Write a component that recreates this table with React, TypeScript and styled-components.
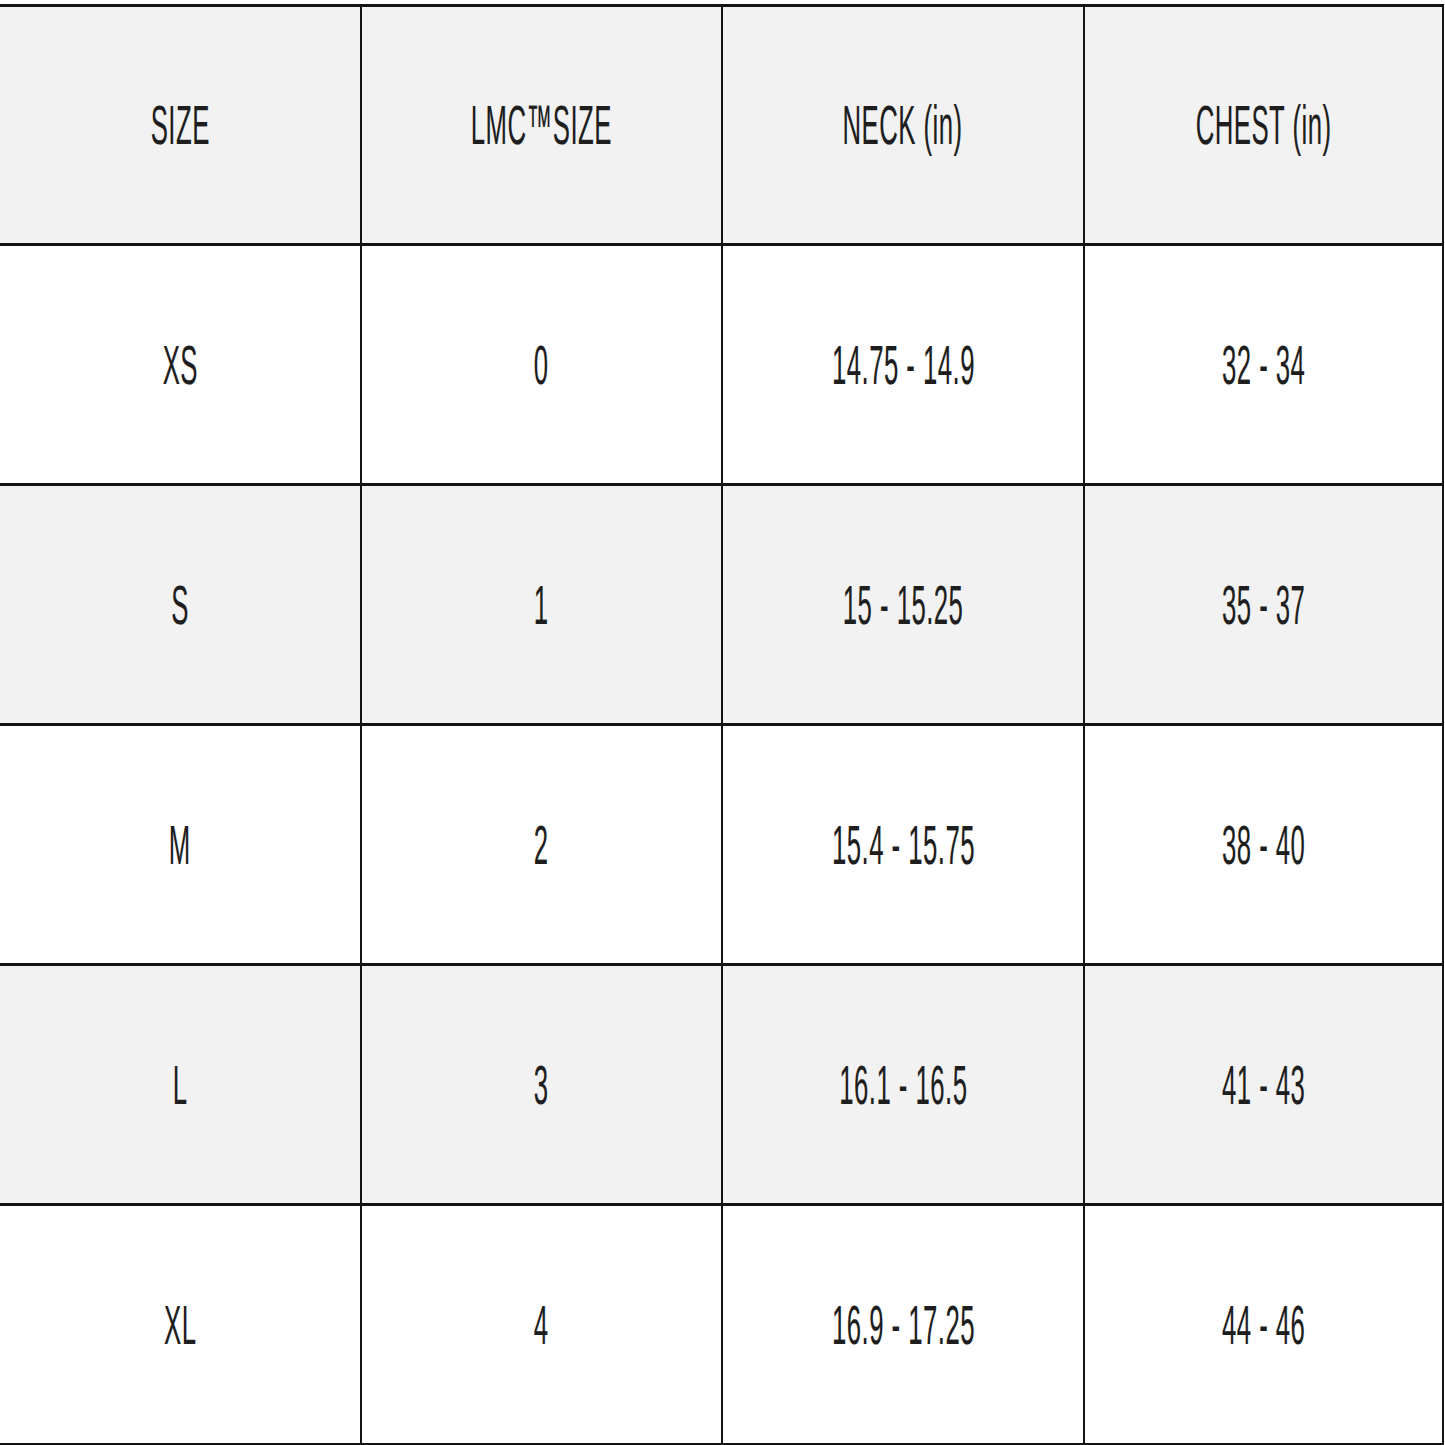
import React from "react";
import styled, { createGlobalStyle } from "styled-components";

const Global = createGlobalStyle`
  html, body {
    margin: 0;
    padding: 0;
    background: #ffffff;
    overflow: hidden;
  }
  body {
    font-family: "Liberation Sans", Arial, sans-serif;
  }
`;

const Table = styled.div`
  display: grid;
  grid-template-columns: 362px 361px 362px 359px;
  grid-template-rows: 239px repeat(5, 240px);
  margin-top: 4px;
  border-top: 3px solid #141414;
  width: 1444px;
  box-sizing: border-box;
`;

const Cell = styled.div<{ $shaded: boolean }>`
  display: flex;
  align-items: center;
  justify-content: center;
  box-sizing: border-box;
  background: ${(p) => (p.$shaded ? "#f2f2f2" : "#ffffff")};
  border-bottom: 3px solid #141414;
  border-right: 2px solid #141414;
  overflow: hidden;
`;

const Label = styled.span`
  display: inline-block;
  font-family: "Liberation Sans", Arial, sans-serif;
  font-size: 56px;
  line-height: 1;
  color: #1e1e1e;
  white-space: nowrap;
  letter-spacing: 1px;
  transform: scaleX(0.46);
  transform-origin: center;
  -webkit-text-stroke: 0.2px #1e1e1e;
`;

const rows: string[][] = [
  ["SIZE", "LMC\u2122SIZE", "NECK (in)", "CHEST (in)"],
  ["XS", "0", "14.75 - 14.9", "32 - 34"],
  ["S", "1", "15 - 15.25", "35 - 37"],
  ["M", "2", "15.4 - 15.75", "38 - 40"],
  ["L", "3", "16.1 - 16.5", "41 - 43"],
  ["XL", "4", "16.9 - 17.25", "44 - 46"],
];

export default function App() {
  return (
    <>
      <Global />
      <Table>
        {rows.map((row, r) =>
          row.map((text, c) => (
            <Cell key={`${r}-${c}`} $shaded={r % 2 === 0}>
              <Label>{text}</Label>
            </Cell>
          ))
        )}
      </Table>
    </>
  );
}
